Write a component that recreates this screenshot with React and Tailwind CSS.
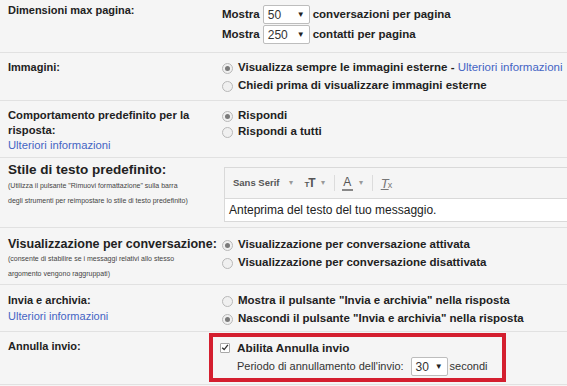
import React from "react";

const font = { fontFamily: '"Liberation Sans", Arial, sans-serif' };

function Radio({ checked }) {
  return (
    <span className="relative inline-flex w-[11px] h-[11px] shrink-0 rounded-full border border-[#b8b8b8] bg-[#f0f0f0] items-center justify-center mr-[5px]">
      {checked && <span className="w-[5px] h-[5px] rounded-full bg-[#7a7a7a]" />}
    </span>
  );
}

function RadioLine({ checked, children }) {
  return (
    <div className="flex items-center h-[18px] text-[11.5px] font-bold text-[#222] whitespace-nowrap">
      <Radio checked={checked} />
      <span>{children}</span>
    </div>
  );
}

function Select({ value, w = "w-[47px]" }) {
  return (
    <span className={`inline-flex items-center justify-between h-[19px] ${w} bg-white border border-[#bdbdbd] rounded-[2px] px-[4px] text-[12px] font-normal text-[#333]`}>
      <span>{value}</span>
      <span className="text-[8px] text-[#222]">▼</span>
    </span>
  );
}

function Row({ h, children }) {
  return <div className={`flex border-b border-[#e1e1e1] ${h}`}>{children}</div>;
}

const link = "text-[#4464c4] font-normal";

export default function App() {
  return (
    <div className="w-[567px] h-[386px] overflow-hidden bg-[#f5f5f5] text-[#222]" style={font}>
      {/* Dimensioni max pagina */}
      <Row h="h-[53px]">
        <div className="w-[222px] shrink-0 pl-2 pt-[4px] text-[11px] font-bold leading-[13px]">Dimensioni max pagina:</div>
        <div className="flex flex-col pt-[5px] gap-[1px] text-[11.5px] font-bold whitespace-nowrap">
          <div className="flex items-center gap-[3px] h-[19px]">
            Mostra <Select value="50" /> conversazioni per pagina
          </div>
          <div className="flex items-center gap-[3px] h-[19px]">
            Mostra <Select value="250" /> contatti per pagina
          </div>
        </div>
      </Row>

      {/* Immagini */}
      <Row h="h-[48px]">
        <div className="w-[222px] shrink-0 pl-2 pt-[8px] text-[11px] font-bold leading-[13px]">Immagini:</div>
        <div className="flex flex-col pt-[6px]">
          <RadioLine checked>
            Visualizza sempre le immagini esterne - <span className={link}>Ulteriori informazioni</span>
          </RadioLine>
          <RadioLine>Chiedi prima di visualizzare immagini esterne</RadioLine>
        </div>
      </Row>

      {/* Comportamento risposta */}
      <Row h="h-[57px]">
        <div className="w-[222px] shrink-0 pl-2 pt-[7px] text-[11.25px] leading-[15px]">
          <div className="font-bold">Comportamento predefinito per la</div>
          <div className="font-bold">risposta:</div>
          <div className={link}>Ulteriori informazioni</div>
        </div>
        <div className="flex flex-col pt-[6px]">
          <RadioLine checked>Rispondi</RadioLine>
          <div className="-mt-[2px]">
            <RadioLine>Rispondi a tutti</RadioLine>
          </div>
        </div>
      </Row>

      {/* Stile di testo */}
      <Row h="h-[70px]">
        <div className="w-[222px] shrink-0 pl-2 pt-[4px]">
          <div className="text-[13.5px] font-bold leading-[16px] whitespace-nowrap">Stile di testo predefinito:</div>
          <div className="text-[7px] leading-[15px] text-[#444] whitespace-nowrap">
            (Utilizza il pulsante "Rimuovi formattazione" sulla barra
            <br />
            degli strumenti per reimpostare lo stile di testo predefinito)
          </div>
        </div>
        <div className="pt-[9px] pl-[2px] shrink-0">
          <div className="w-[360px] border border-[#d9d9d9] bg-white">
            <div className="h-[31px] bg-[#f5f5f5] border-b border-[#d9d9d9] flex items-center pl-[8px] text-[#555]">
              <span className="text-[9.5px] font-bold">Sans Serif</span>
              <span className="text-[8px] text-[#999] ml-[10px]">▾</span>
              <span className="ml-[11px] flex items-end font-bold leading-none">
                <span className="text-[8px]">T</span>
                <span className="text-[12px] -ml-[1px]">T</span>
              </span>
              <span className="text-[8px] text-[#999] ml-[5px]">▾</span>
              <span className="ml-[9px] w-px h-[16px] bg-[#dcdcdc]" />
              <span className="ml-[7px] flex flex-col items-center leading-none">
                <span className="text-[12px] text-[#555]">A</span>
                <span className="w-[11px] h-[2px] bg-[#888] mt-[1px]" />
              </span>
              <span className="text-[8px] text-[#999] ml-[6px]">▾</span>
              <span className="ml-[9px] w-px h-[16px] bg-[#dcdcdc]" />
              <span className="ml-[8px] flex items-end leading-none text-[#777]">
                <span className="text-[13px] italic underline">T</span>
                <span className="text-[9px] -ml-[1px]">x</span>
              </span>
            </div>
            <div className="h-[22px] flex items-center pl-[4px] text-[12px] whitespace-nowrap">Anteprima del testo del tuo messaggio.</div>
          </div>
        </div>
      </Row>

      {/* Visualizzazione per conversazione */}
      <Row h="h-[57px]">
        <div className="w-[222px] shrink-0 pl-2 pt-[9px]">
          <div className="text-[12.5px] font-bold leading-[14px] whitespace-nowrap">Visualizzazione per conversazione:</div>
          <div className="text-[7px] leading-[15px] text-[#444]">
            (consente di stabilire se i messaggi relativi allo stesso
            <br />
            argomento vengono raggruppati)
          </div>
        </div>
        <div className="flex flex-col pt-[8px]">
          <RadioLine checked>Visualizzazione per conversazione attivata</RadioLine>
          <RadioLine>Visualizzazione per conversazione disattivata</RadioLine>
        </div>
      </Row>

      {/* Invia e archivia */}
      <Row h="h-[47px]">
        <div className="w-[222px] shrink-0 pl-2 pt-[7px] text-[11px] leading-[16px]">
          <div className="font-bold">Invia e archivia:</div>
          <div className={link}>Ulteriori informazioni</div>
        </div>
        <div className="flex flex-col pt-[7px]">
          <RadioLine>Mostra il pulsante "Invia e archivia" nella risposta</RadioLine>
          <RadioLine checked>Nascondi il pulsante "Invia e archivia" nella risposta</RadioLine>
        </div>
      </Row>

      {/* Annulla invio */}
      <Row h="h-[53px]">
        <div className="w-[209px] shrink-0 pl-2 pt-[8px] text-[11px] font-bold leading-[13px]">Annulla invio:</div>
        <div className="mt-[1px] w-[297px] shrink-0 h-[49px] border-[4px] border-[#d41f2f] pl-[7px] pt-[2px]">
          <div className="flex items-center h-[17px] text-[11.75px] font-bold">
            <span className="w-[10px] h-[10px] border border-[#a8a8a8] bg-white rounded-[1px] mr-[7px] flex items-center justify-center">
              <svg viewBox="0 0 10 10" className="w-[9px] h-[9px]">
                <path d="M1.5 5.2 L4 7.6 L8.6 1.8" fill="none" stroke="#333" strokeWidth="1.7" />
              </svg>
            </span>
            Abilita Annulla invio
          </div>
          <div className="flex items-center h-[21px] pl-[17px] text-[11px] text-[#333] whitespace-nowrap">
            Periodo di annullamento dell'invio:
            <span className="ml-[7px] mr-[2px]">
              <Select value="30" w="w-[37px]" />
            </span>
            secondi
          </div>
        </div>
      </Row>
    </div>
  );
}
